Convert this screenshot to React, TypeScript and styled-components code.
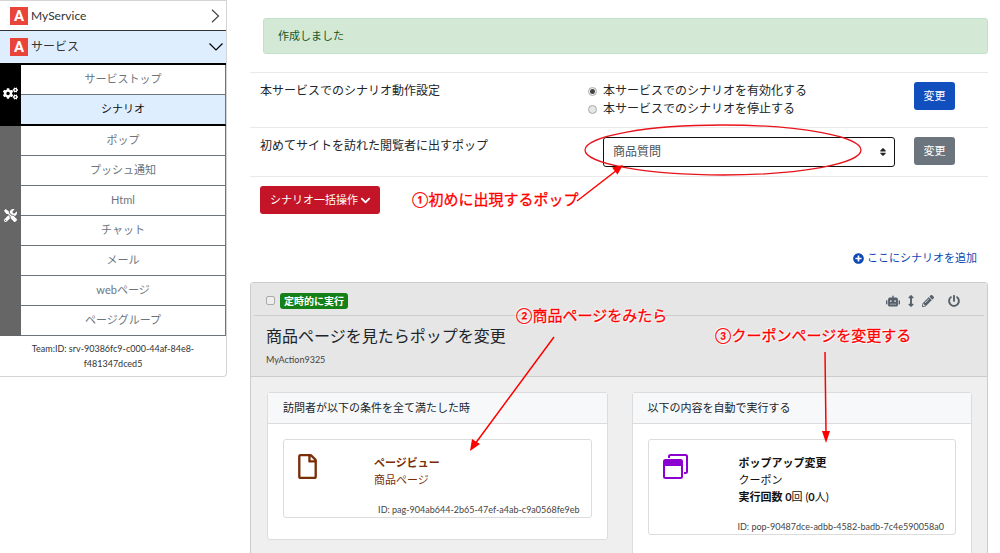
import React from "react";
import styled, { createGlobalStyle, css } from "styled-components";
import {
  FaCogs,
  FaTools,
  FaPlusCircle,
  FaRobot,
  FaArrowsAltV,
  FaPencilAlt,
  FaPowerOff,
  FaRegFile,
  FaChevronDown,
  FaSort,
} from "react-icons/fa";

const GlobalStyle = createGlobalStyle`
  *, *::before, *::after { box-sizing: border-box; }
  body {
    margin: 0;
    background: #fff;
    color: #212529;
    font: 12px/18px Lato, "Noto Sans CJK JP", sans-serif;
  }
  button, select, input { font: inherit; margin: 0; }
`;

const Page = styled.div`
  position: relative;
  display: flex;
  align-items: flex-start;
  gap: 23px;
  padding-right: 12px;
`;

/* ---------- sidebar ---------- */

const Sidebar = styled.nav`
  flex: 0 0 227px;
  border: 1px solid #d5d5d5;
  border-left: 0;
  border-radius: 0 0 4px 0;
`;

const ServiceLink = styled.a<{ $open?: boolean }>`
  display: flex;
  align-items: center;
  gap: 3px;
  height: ${(p) => (p.$open ? 34 : 30)}px;
  padding: 0 3px 0 10px;
  color: #333;
  text-decoration: none;
  background: ${(p) => (p.$open ? "#deeeff" : "#fff")};
  border-bottom: ${(p) => (p.$open ? "2px solid #000" : "1px solid #333")};
`;

const Logo = styled.span`
  width: 18px;
  height: 18px;
  color: #fff;
  background: #e8443a;
  font: 700 15px/19px Roboto, sans-serif;
  text-align: center;
`;

const ServiceName = styled.span`
  flex: 1;
`;

const MenuGroup = styled.div<{ $dark?: boolean }>`
  display: flex;
  color: #fff;
  background: ${(p) => (p.$dark ? "#000" : "#666")};
  border-bottom: ${(p) => (p.$dark ? "1px solid #000" : "0")};
`;

const MenuIcon = styled.div<{ $raised?: boolean }>`
  flex: 0 0 21px;
  display: flex;
  align-items: center;
  justify-content: center;
  padding-bottom: ${(p) => (p.$raised ? 32 : 4)}px;
`;

const MenuList = styled.ul`
  flex: 1;
  margin: 0;
  padding: 0;
  list-style: none;
`;

const MenuLink = styled.a<{ $active?: boolean }>`
  display: block;
  height: 30px;
  font-size: 11px;
  line-height: 28px;
  text-align: center;
  text-decoration: none;
  color: ${(p) => (p.$active ? "#111" : "#6c757d")};
  background: ${(p) => (p.$active ? "#deeeff" : "#fff")};
  border-bottom: 1px solid ${(p) => (p.$active ? "#000" : "#6c757d")};
  border-right: 1px solid #6c757d;
`;

const TeamId = styled.p`
  margin: 0;
  padding: 5px 24px;
  font-size: 9px;
  line-height: 15px;
  text-align: center;
  color: #333;
`;

/* ---------- main column ---------- */

const Main = styled.main`
  flex: 1;
  min-width: 0;
  padding-top: 18px;
`;

const Alert = styled.div`
  margin: 0 0 18px 13px;
  padding: 8px 14px;
  font-size: 11px;
  color: #155724;
  background: #d4e8d6;
  border: 1px solid #c3e1c8;
  border-radius: 3px;
`;

const SettingRow = styled.div<{ $height: number }>`
  display: grid;
  grid-template-columns: 328px 1fr 74px;
  min-height: ${(p) => p.$height}px;
  padding: 9px 0 9px 10px;
  border-top: 1px solid #e9e9e9;
`;

const RadioLabel = styled.label`
  display: flex;
  align-items: center;
  gap: 6px;
  height: 18px;
`;

const Radio = styled.input`
  appearance: none;
  width: 9px;
  height: 9px;
  border: 1px solid #aaa;
  border-radius: 50%;
  background: #e6e6e6;
  &:checked {
    background: radial-gradient(circle, #444 0 2px, #f2f2f2 3px);
  }
`;

const buttonBase = css`
  height: 28px;
  color: #fff;
  font-size: 11px;
  line-height: 18px;
  border: 0;
  border-radius: 3px;
`;

const ChangeButton = styled.button<{ $muted?: boolean }>`
  ${buttonBase}
  width: 41px;
  padding: 0;
  background: ${(p) => (p.$muted ? "#6c757d" : "#114fbe")};
`;

const BulkButton = styled.button`
  ${buttonBase}
  display: flex;
  align-items: center;
  gap: 2px;
  padding: 0 9px 0 10px;
  background: #c31527;
`;

const BulkBar = styled.div`
  padding: 9px 10px;
  border-top: 1px solid #e9e9e9;
`;

const SelectWrap = styled.div`
  position: relative;
  margin: 0 19px 0 15px;
  svg {
    position: absolute;
    right: 7px;
    top: 10px;
    pointer-events: none;
  }
`;

const Select = styled.select`
  appearance: none;
  display: block;
  width: 100%;
  height: 30px;
  padding: 0 9px;
  color: #495057;
  background: #fff;
  border: 1px solid #111;
  border-radius: 3px;
`;

const AddBar = styled.div`
  display: flex;
  justify-content: flex-end;
  padding: 26px 11px 15px 0;
`;

const AddLink = styled.a`
  display: flex;
  align-items: center;
  gap: 3px;
  font-size: 11px;
  color: #0d47b3;
  text-decoration: none;
`;

/* ---------- scenario card ---------- */

const Scenario = styled.section`
  background: #efefef;
  border: 1px solid #ccc;
  border-radius: 3px;
`;

const ScenarioHead = styled.header`
  padding: 0 3px 9px;
  background: #e6e6e6;
  border-bottom: 1px solid #ccc;
`;

const Toolbar = styled.div`
  display: flex;
  align-items: center;
  height: 33px;
  padding: 3px 24px 0 12px;
  border-bottom: 1px solid #ccc;
`;

const Check = styled.input`
  appearance: none;
  width: 9px;
  height: 9px;
  border: 1px solid #aaa;
  border-radius: 2px;
  background: #eee;
`;

const Badge = styled.span`
  margin-left: 5px;
  padding: 0 4px;
  font-size: 10px;
  line-height: 16px;
  font-weight: 700;
  color: #fff;
  background: #168018;
  border-radius: 3px;
`;

const Tools = styled.div`
  display: flex;
  align-items: center;
  margin-left: auto;
  gap: 8px;
`;

const ToolButton = styled.button<{ $apart?: boolean }>`
  display: flex;
  padding: 0;
  margin-left: ${(p) => (p.$apart ? 6 : 0)}px;
  color: #56606a;
  background: none;
  border: 0;
`;

const ArrowsIcon = styled(FaArrowsAltV)`
  width: 6px;
  height: 12px;
`;

const Title = styled.h2`
  margin: 0;
  padding: 8px 12px 0;
  font-size: 16px;
  line-height: 24px;
  font-weight: 400;
`;

const Subtitle = styled.p`
  margin: 0;
  padding: 4px 12px 0;
  font-size: 9px;
  line-height: 15px;
  color: #444;
`;

const Columns = styled.div`
  display: grid;
  grid-template-columns: 1fr 1fr;
  align-items: start;
  gap: 24px;
  padding: 15px 15px 15px 16px;
`;

const Panel = styled.section`
  background: #fff;
  border: 1px solid #dcdcdc;
  border-radius: 3px;
`;

const PanelHead = styled.h3`
  margin: 0;
  padding: 6px 15px;
  font-size: 11px;
  line-height: 18px;
  font-weight: 400;
  background: #f7f8f9;
  border-bottom: 1px solid #dcdcdc;
`;

const Item = styled.article`
  display: grid;
  grid-template-columns: 76px 1fr;
  margin: 15px 15px 21px;
  padding: 14px 11px 0 14px;
  font-size: 11px;
  line-height: 17px;
  border: 1px solid #dcdcdc;
  border-radius: 3px;
`;

const PageIcon = styled(FaRegFile)`
  width: 19px;
  height: 25px;
`;

const ItemText = styled.div<{ $color: string }>`
  color: ${(p) => p.$color};
`;

const ItemName = styled.div`
  font-weight: 700;
`;

const ItemId = styled.div`
  grid-column: 1 / -1;
  padding-top: 14px;
  font-size: 9px;
  line-height: 15px;
  text-align: right;
  color: #444;
`;

/* ---------- annotations drawn over the page ---------- */

const Drawing = styled.svg`
  position: absolute;
  left: 0;
  top: 0;
  pointer-events: none;
`;

const Note = styled.div<{ $x: number; $y: number }>`
  position: absolute;
  left: ${(p) => p.$x}px;
  top: ${(p) => p.$y}px;
  font-size: 15px;
  line-height: 20px;
  font-weight: 400;
  white-space: nowrap;
  color: #f00;
  -webkit-text-stroke: 0.300px #f00;
  text-shadow: 0 0 2px #fff, 1px 1px 1px #fff, -1px -1px 1px #fff;
  pointer-events: none;
`;

const Chevron = ({ down }: { down?: boolean }) => (
  <svg width="14" height="14" viewBox="0 0 14 14" fill="none" stroke={down ? "#000" : "#444"} aria-hidden="true">
    <path d={down ? "M0.500 3.500 L7 10 L13.500 3.500" : "M3 0.800 L9.500 7 L3 13.200"} strokeWidth="1.200" />
  </svg>
);

const PopupIcon = () => (
  <svg width="25" height="25" viewBox="0 0 25 25" aria-hidden="true">
    <rect x="6" y="1" width="18" height="18" rx="1.500" fill="#fff" stroke="#8b00d0" strokeWidth="2" />
    <rect x="0" y="4" width="21" height="21" fill="#fff" />
    <rect x="1" y="6" width="18" height="18" rx="1.500" fill="#fff" stroke="#8b00d0" strokeWidth="2" />
    <rect x="1" y="6" width="18" height="6" fill="#8b00d0" />
  </svg>
);

const settingsMenu = ["サービストップ", "シナリオ"];
const toolsMenu = ["ポップ", "プッシュ通知", "Html", "チャット", "メール", "webページ", "ページグループ"];

const Menu = ({ items, active }: { items: string[]; active?: string }) => (
  <MenuList>
    {items.map((name) => (
      <li key={name}>
        <MenuLink href="#" $active={name === active}>
          {name}
        </MenuLink>
      </li>
    ))}
  </MenuList>
);

export default function App() {
  return (
    <>
      <GlobalStyle />
      <Page>
        <Sidebar>
          <ServiceLink href="#">
            <Logo aria-hidden="true">A</Logo>
            <ServiceName>MyService</ServiceName>
            <Chevron />
          </ServiceLink>
          <ServiceLink href="#" $open>
            <Logo aria-hidden="true">A</Logo>
            <ServiceName>サービス</ServiceName>
            <Chevron down />
          </ServiceLink>
          <MenuGroup $dark>
            <MenuIcon>
              <FaCogs size={15} />
            </MenuIcon>
            <Menu items={settingsMenu} active="シナリオ" />
          </MenuGroup>
          <MenuGroup>
            <MenuIcon $raised>
              <FaTools size={13} />
            </MenuIcon>
            <Menu items={toolsMenu} />
          </MenuGroup>
          <TeamId>Team:ID: srv-90386fc9-c000-44af-84e8-f481347dced5</TeamId>
        </Sidebar>

        <Main>
          <Alert role="status">作成しました</Alert>

          <SettingRow $height={55}>
            <div>本サービスでのシナリオ動作設定</div>
            <div>
              <RadioLabel>
                <Radio type="radio" name="scenario" defaultChecked />
                本サービスでのシナリオを有効化する
              </RadioLabel>
              <RadioLabel>
                <Radio type="radio" name="scenario" />
                本サービスでのシナリオを停止する
              </RadioLabel>
            </div>
            <ChangeButton type="button">変更</ChangeButton>
          </SettingRow>
          <SettingRow $height={49}>
            <label htmlFor="first-pop">初めてサイトを訪れた閲覧者に出すポップ</label>
            <SelectWrap>
              <Select id="first-pop">
                <option>商品質問</option>
              </Select>
              <FaSort size={10} />
            </SelectWrap>
            <ChangeButton type="button" $muted>
              変更
            </ChangeButton>
          </SettingRow>
          <BulkBar>
            <BulkButton type="button">
              シナリオ一括操作 <FaChevronDown size={11} />
            </BulkButton>
          </BulkBar>

          <AddBar>
            <AddLink href="#">
              <FaPlusCircle size={11} />
              ここにシナリオを追加
            </AddLink>
          </AddBar>

          <Scenario>
            <ScenarioHead>
              <Toolbar>
                <Check type="checkbox" aria-label="商品ページを見たらポップを変更" />
                <Badge>定時的に実行</Badge>
                <Tools>
                  <ToolButton type="button" aria-label="ロボット">
                    <FaRobot size={14} />
                  </ToolButton>
                  <ToolButton type="button" aria-label="並べ替え">
                    <ArrowsIcon />
                  </ToolButton>
                  <ToolButton type="button" aria-label="編集">
                    <FaPencilAlt size={12} />
                  </ToolButton>
                  <ToolButton type="button" aria-label="停止" $apart>
                    <FaPowerOff size={12} />
                  </ToolButton>
                </Tools>
              </Toolbar>
              <Title>商品ページを見たらポップを変更</Title>
              <Subtitle>MyAction9325</Subtitle>
            </ScenarioHead>
            <Columns>
              <Panel>
                <PanelHead>訪問者が以下の条件を全て満たした時</PanelHead>
                <Item>
                  <PageIcon color="#7a2e08" />
                  <ItemText $color="#7a2e08">
                    <ItemName>ページビュー</ItemName>
                    <div>商品ページ</div>
                  </ItemText>
                  <ItemId>ID: pag-904ab644-2b65-47ef-a4ab-c9a0568fe9eb</ItemId>
                </Item>
              </Panel>
              <Panel>
                <PanelHead>以下の内容を自動で実行する</PanelHead>
                <Item>
                  <PopupIcon />
                  <ItemText $color="#111">
                    <ItemName>ポップアップ変更</ItemName>
                    <div>クーポン</div>
                    <div>
                      <b>実行回数 0</b>回 (<b>0</b>人)
                    </div>
                  </ItemText>
                  <ItemId>ID: pop-90487dce-adbb-4582-badb-7c4e590058a0</ItemId>
                </Item>
              </Panel>
            </Columns>
          </Scenario>
        </Main>

        <Drawing width="1000" height="553" viewBox="0 0 1000 553" fill="none" stroke="#f00" aria-hidden="true">
          <ellipse cx="723" cy="150" rx="138" ry="25" strokeWidth="1.300" stroke="#e8141c" />
          <path d="M577 201 L617 170 M554 337 L475 444 M825 352 L826 432" strokeWidth="1.500" />
          <g fill="#f00" stroke="none">
            <path d="M623 165 L617.500 174.500 L612 167.500 Z" />
            <path d="M470 451 L472 439 L480 444 Z" />
            <path d="M826 443 L822 431 L830 431 Z" />
          </g>
        </Drawing>
        <Note $x={412} $y={189}>①初めに出現するポップ</Note>
        <Note $x={516} $y={305}>②商品ページをみたら</Note>
        <Note $x={715} $y={325}>③クーポンページを変更する</Note>
      </Page>
    </>
  );
}
